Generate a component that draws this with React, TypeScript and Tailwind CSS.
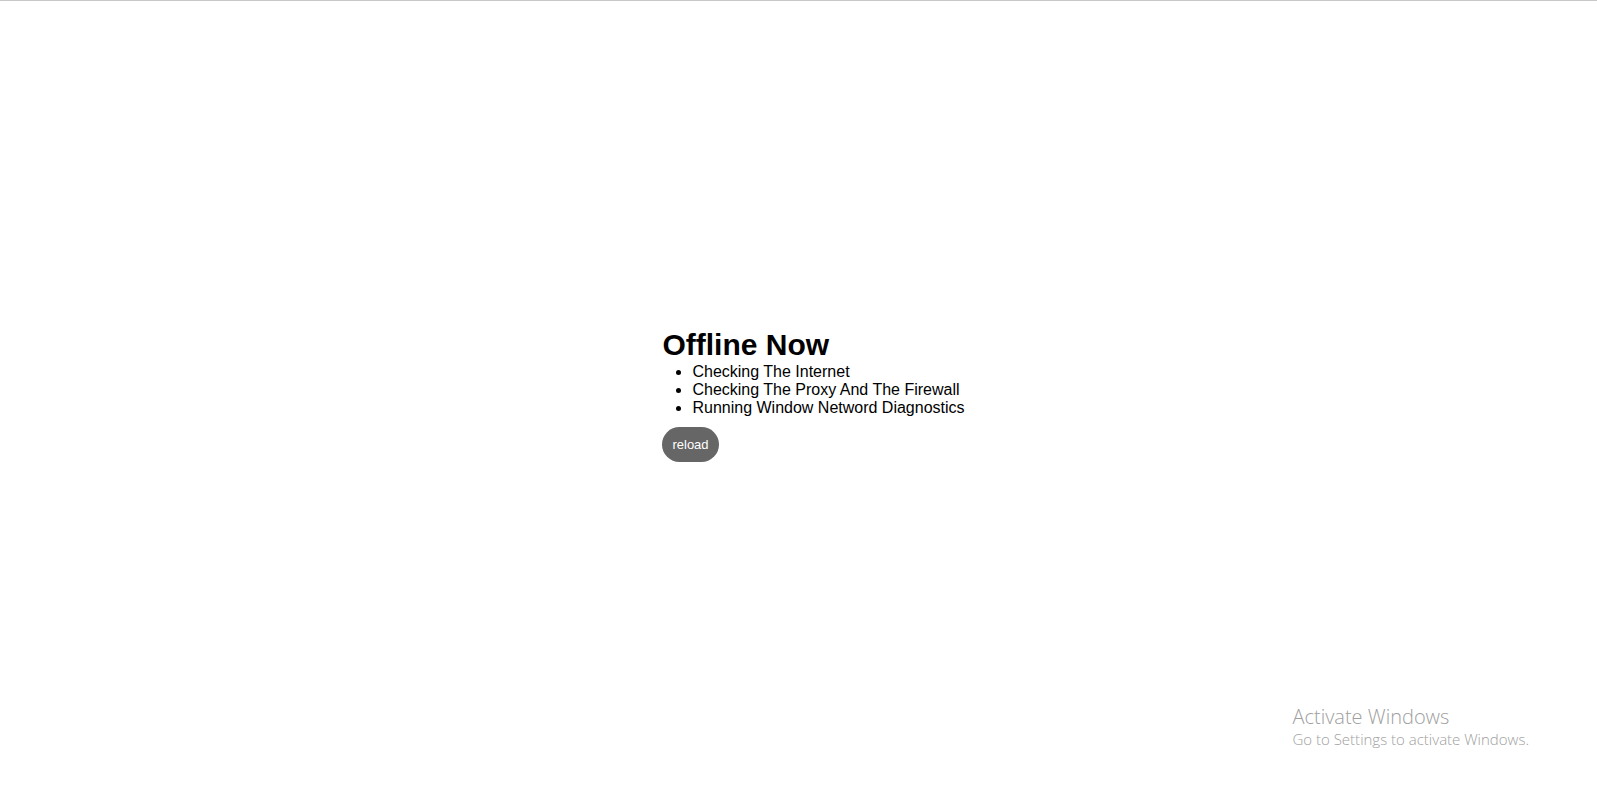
const checks = [
  'Checking The Internet',
  'Checking The Proxy And The Firewall',
  'Running Window Netword Diagnostics',
];

export default function App() {
  return (
    <div className="relative flex min-h-screen items-center justify-center border-t border-[#c8c8c8] bg-white font-['Liberation_Sans',Arial,sans-serif] text-black">
      <main className="pl-[30px]">
        <h1 className="text-[30px] leading-9 font-bold">Offline Now</h1>
        <ul className="list-disc pl-[30px] text-base leading-[18px]">
          {checks.map((check) => (
            <li key={check}>{check}</li>
          ))}
        </ul>
        <button
          type="button"
          onClick={() => window.location.reload()}
          className="mt-[10px] rounded-[20px] bg-[#666666] p-[10px] text-[13px] leading-[15px] text-white"
        >
          reload
        </button>
      </main>
      <aside className="absolute right-[68px] bottom-[39px] font-['Open_Sans','Noto_Sans',sans-serif] font-light text-[#a0a0a0]">
        <p className="text-xl leading-6">Activate Windows</p>
        <p className="text-[15px] leading-5">Go to Settings to activate Windows.</p>
      </aside>
    </div>
  );
}
